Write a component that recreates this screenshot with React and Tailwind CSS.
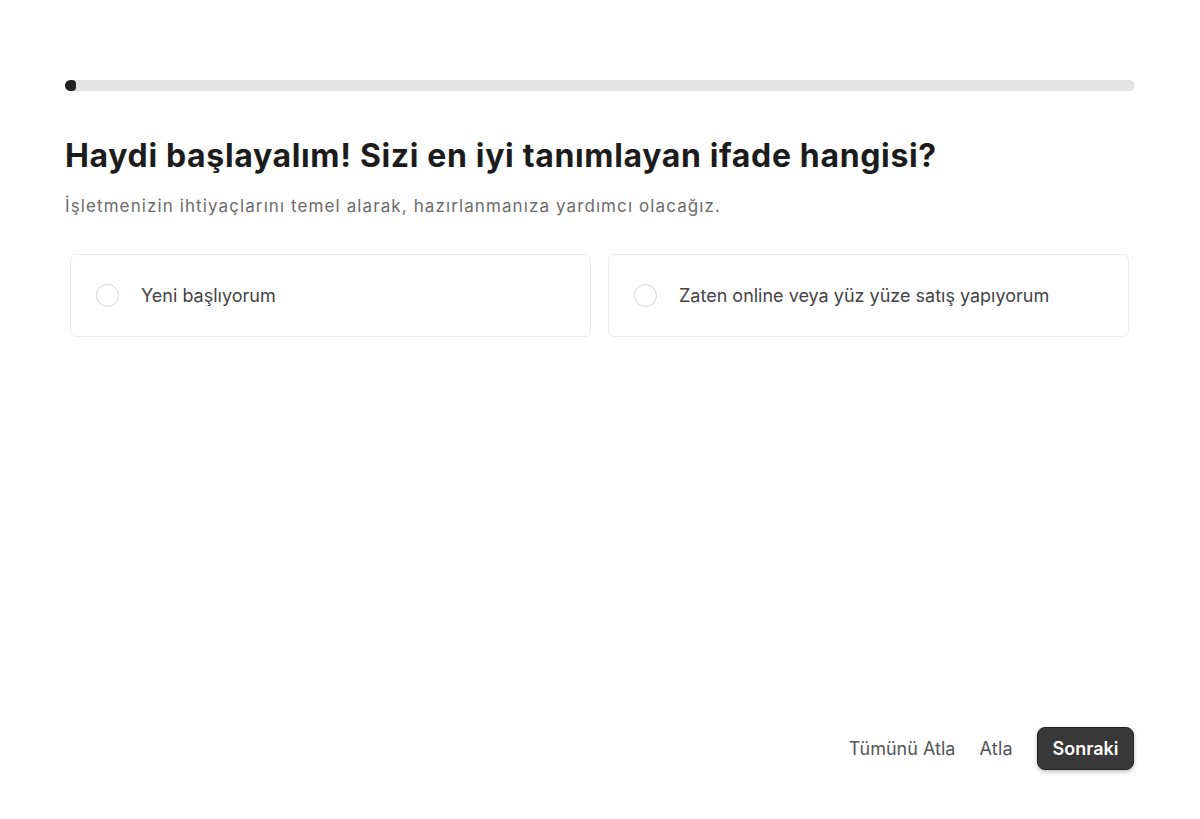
import React from "react";

export default function App() {
  return (
    <div className="min-h-[819px] w-full bg-white flex flex-col px-[65px] pt-[80px] pb-[49px]" style={{ fontFamily: "Inter, 'Noto Sans', sans-serif" }}>
      <div className="h-[11px] w-full rounded-full bg-[#e4e4e4] overflow-hidden">
        <div className="h-full w-[11px] rounded-[4px] bg-[#222]" />
      </div>
      <h1 className="mt-[45px] text-[32px] leading-[40px] font-bold text-[#1c1c1c] tracking-[0.65px]">
        Haydi başlayalım! Sizi en iyi tanımlayan ifade hangisi?
      </h1>
      <p className="mt-[18px] text-[17px] leading-[24px] text-[#6b6b6b] tracking-[1.1px]">
        İşletmenizin ihtiyaçlarını temel alarak, hazırlanmanıza yardımcı olacağız.
      </p>
      <div className="mt-[36px] pl-[5px] pr-[6px] grid grid-cols-2 gap-[17px]">
        {["Yeni başlıyorum", "Zaten online veya yüz yüze satış yapıyorum"].map((t) => (
          <div key={t} className="h-[83px] rounded-[6px] border border-[#ececec] bg-white flex items-center pl-[25px] gap-[22px]">
            <div className="w-[23px] h-[23px] rounded-full border-[1.5px] border-[#d4d4d4] shrink-0" />
            <span className="text-[18px] text-[#444]">{t}</span>
          </div>
        ))}
      </div>
      <div className="flex-1" />
      <div className="flex items-center justify-end">
        <button className="text-[18px] text-[#555] mr-[24px]">Tümünü Atla</button>
        <button className="text-[18px] text-[#555] mr-[24px] tracking-[0.3px]">Atla</button>
        <button className="h-[43px] w-[97px] mr-[1px] rounded-[8px] bg-[#383838] text-white text-[18px] font-semibold shadow-[0_2px_4px_rgba(0,0,0,0.25)] border border-[#222]">
          Sonraki
        </button>
      </div>
    </div>
  );
}
